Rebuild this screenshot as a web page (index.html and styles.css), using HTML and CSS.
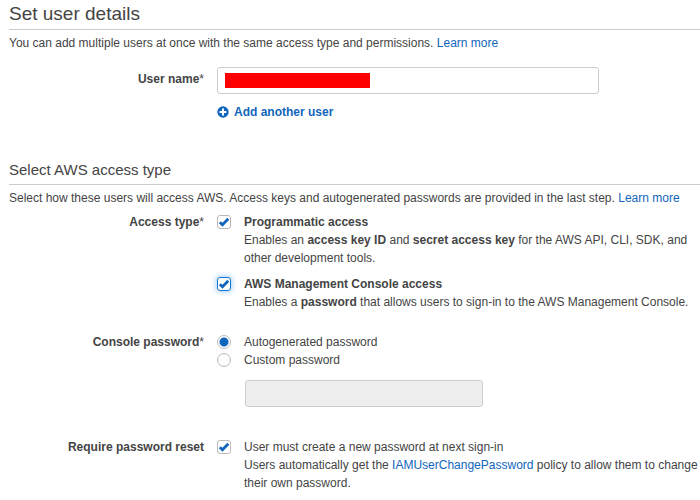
FILE: index.html
```html
<!DOCTYPE html>
<html lang="en">
<head>
<meta charset="utf-8">
<title>Set user details</title>
<link rel="stylesheet" href="styles.css">
</head>
<body>
<form class="page">
  <section class="section">
    <h1 class="title">Set user details</h1>
    <p class="intro">You can add multiple users at once with the same access type and permissions. <a href="#">Learn more</a></p>
    <div class="row row-name">
      <label class="row-label" for="user-name">User name<span class="req">*</span></label>
      <div>
        <div class="name-field">
          <input class="field" id="user-name" type="text">
          <span class="redacted"></span>
        </div>
        <button class="add" type="button">
          <svg class="add-icon" viewBox="0 0 12 12" aria-hidden="true"><circle cx="6" cy="6" r="5.7" fill="#1166bb"/><path d="M6 2.6v6.8M2.6 6h6.8" stroke="#fff" stroke-width="2"/></svg>
          Add another user
        </button>
      </div>
    </div>
  </section>

  <section class="section">
    <h2 class="subtitle">Select AWS access type</h2>
    <p class="intro">Select how these users will access AWS. Access keys and autogenerated passwords are provided in the last step. <a href="#">Learn more</a></p>

    <div class="row row-access">
      <span class="row-label">Access type<span class="req">*</span></span>
      <div class="options">
        <div class="option">
          <span class="tick">
            <input class="box" id="programmatic" type="checkbox" checked>
            <svg class="mark" viewBox="0 0 14 14" aria-hidden="true"><path d="M2.8 7.2 5.5 9.7 11.3 3.8" fill="none" stroke="#1166bb" stroke-width="2.8"/></svg>
          </span>
          <div>
            <label class="strong" for="programmatic">Programmatic access</label>
            <p>Enables an <b>access key ID</b> and <b>secret access key</b> for the AWS API, CLI, SDK, and other development tools.</p>
          </div>
        </div>
        <div class="option">
          <span class="tick">
            <input class="box box-active" id="console" type="checkbox" checked>
            <svg class="mark" viewBox="0 0 14 14" aria-hidden="true"><path d="M2.8 7.2 5.5 9.7 11.3 3.8" fill="none" stroke="#1166bb" stroke-width="2.8"/></svg>
          </span>
          <div>
            <label class="strong" for="console">AWS Management Console access</label>
            <p>Enables a <b>password</b> that allows users to sign-in to the AWS Management Console.</p>
          </div>
        </div>
      </div>
    </div>

    <div class="row row-password">
      <span class="row-label">Console password<span class="req">*</span></span>
      <div>
        <div class="option">
          <span class="tick"><input class="radio" id="auto" name="password" type="radio" checked></span>
          <label for="auto">Autogenerated password</label>
        </div>
        <div class="option">
          <span class="tick"><input class="radio" id="custom" name="password" type="radio"></span>
          <label for="custom">Custom password</label>
        </div>
        <input class="field field-password" type="password" aria-label="Custom password" disabled>
      </div>
    </div>

    <div class="row row-reset">
      <span class="row-label">Require password reset</span>
      <div class="option">
        <span class="tick">
          <input class="box" id="reset" type="checkbox" checked>
          <svg class="mark" viewBox="0 0 14 14" aria-hidden="true"><path d="M2.8 7.2 5.5 9.7 11.3 3.8" fill="none" stroke="#1166bb" stroke-width="2.8"/></svg>
        </span>
        <div>
          <label for="reset">User must create a new password at next sign-in</label>
          <p>Users automatically get the <a href="#">IAMUserChangePassword</a> policy to allow them to change their own password.</p>
        </div>
      </div>
    </div>
  </section>
</form>
</body>
</html>
```
FILE: styles.css
```css
* {
  box-sizing: border-box;
}

body {
  margin: 0;
  background: #fff;
  color: #444;
  font: 12px/18px "Liberation Sans", Arial, sans-serif;
}

h1, h2, p {
  margin: 0;
  font-weight: normal;
}

a {
  color: #1166bb;
  text-decoration: none;
}

.page {
  padding: 2px 0 8px 9px;
}

.section + .section {
  margin-top: 37px;
}

.title,
.subtitle {
  border-bottom: 1px solid #ccc;
  margin-bottom: 4px;
}

.title {
  font-size: 19px;
  line-height: 24px;
  padding-bottom: 3px;
}

.subtitle {
  font-size: 15px;
  line-height: 24px;
  padding-bottom: 2px;
}

.row {
  display: grid;
  grid-template-columns: 195px minmax(0, 1fr);
  column-gap: 13px;
}

.row-name {
  margin-top: 15px;
}

.row-access {
  margin-top: 6px;
}

.row-password {
  margin-top: 22px;
}

.row-reset {
  margin-top: 31px;
}

.row-label {
  text-align: right;
  font-weight: bold;
}

.row-name .row-label {
  padding-top: 3px;
}

.req {
  font-weight: normal;
}

.name-field {
  position: relative;
  max-width: 382px;
}

.field {
  display: block;
  width: 100%;
  height: 27px;
  padding: 4px 8px;
  border: 1px solid #ccc;
  border-radius: 3px;
  background: #fff;
  color: #444;
  font: inherit;
}

.redacted {
  position: absolute;
  left: 8px;
  top: 6px;
  width: 145px;
  height: 15px;
  background: #f00;
}

.add {
  display: flex;
  align-items: center;
  gap: 5px;
  margin-top: 9px;
  padding: 0;
  border: 0;
  background: none;
  color: #1166bb;
  font: inherit;
  font-weight: bold;
}

.add-icon {
  width: 12px;
  height: 12px;
}

.options {
  display: grid;
  gap: 8px;
}

.option {
  display: grid;
  grid-template-columns: 14px minmax(0, 1fr);
  column-gap: 13px;
}

.option label {
  display: block;
}

.option .strong {
  font-weight: bold;
}

.tick {
  display: grid;
  height: 18px;
  align-items: center;
}

.box,
.radio,
.mark {
  grid-area: 1 / 1;
  width: 14px;
  height: 14px;
}

.box,
.radio {
  appearance: none;
  margin: 0;
  border: 1px solid #bbb;
  background: #fff;
}

.box {
  border-radius: 3px;
}

.box-active {
  border-color: #1177cc;
  box-shadow: 0 0 6px #88bbee;
}

.radio {
  border-radius: 50%;
}

.radio:checked {
  background: radial-gradient(circle, #1166bb 4px, #fff 5px);
}

.mark {
  pointer-events: none;
}

.box:not(:checked) + .mark {
  visibility: hidden;
}

.field-password {
  max-width: 238px;
  margin: 11px 0 0 28px;
  background: #eee;
}
```
